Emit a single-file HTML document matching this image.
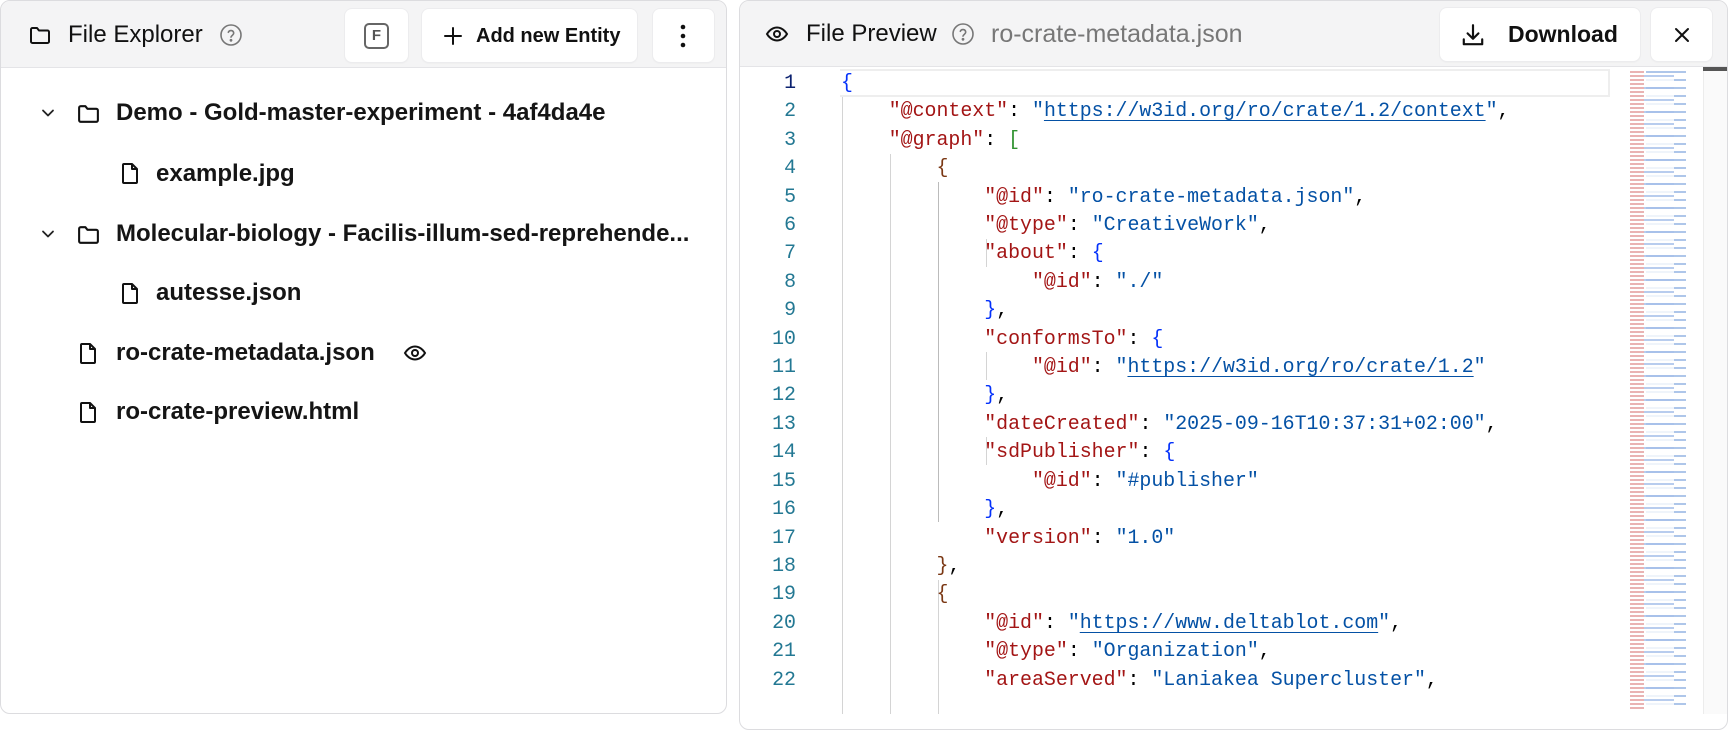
<!DOCTYPE html>
<html><head><meta charset="utf-8"><style>
*{box-sizing:border-box;margin:0;padding:0}
body{width:1728px;height:714px;background:#fff;font-family:"Liberation Sans",sans-serif;position:relative;overflow:hidden;color:#111}
.panel{position:absolute;top:0;border:1px solid #dcdcdf;border-radius:10px;overflow:hidden;background:#fff}
.hdr{position:absolute;left:0;top:0;right:0;height:67px;background:#f4f4f5;border-bottom:1px solid #e4e4e7}
.abs{position:absolute}
.btn{position:absolute;top:8px;height:53px;background:#fff;border-radius:7px;box-shadow:0 0 0 1px #ececee,0 1px 2px rgba(0,0,0,.06)}
.t{position:absolute;font-size:24px;font-weight:500;white-space:nowrap;line-height:28px}
.row{position:absolute;font-size:24px;font-weight:bold;white-space:nowrap;line-height:28px;color:#151515}
.code{position:absolute;left:841px;font-family:"Liberation Mono",monospace;font-size:19.9px;line-height:28.4px;white-space:pre;color:#000}
.ln{position:absolute;left:740px;width:56px;text-align:right;font-family:"Liberation Mono",monospace;font-size:19.9px;line-height:28.4px;color:#237893;white-space:pre}
.k{color:#a31515}.s{color:#0451a5}.u{color:#0451a5;text-decoration:underline;text-underline-offset:4px}
.b1{color:#0431fa}.b2{color:#319331}.b3{color:#7b3814}
.g{position:absolute;width:1px;background:#d4d4d4}
</style></head><body>

<!-- LEFT PANEL -->
<div class="panel" style="left:0;width:727px;height:714px">
 <div class="hdr"></div>
 <svg class="abs" style="left:27px;top:22px" width="24" height="24" viewBox="0 0 24 24" fill="none" stroke="#111" stroke-width="2" stroke-linejoin="round"><path d="M3 6.5a1.5 1.5 0 0 1 1.5-1.5h4.5l2 2.5h8.5a1.5 1.5 0 0 1 1.5 1.5v9.5a1.5 1.5 0 0 1-1.5 1.5h-15A1.5 1.5 0 0 1 3 18.5z"/></svg>
 <div class="t" style="left:67px;top:20px;font-weight:normal;color:#111">File Explorer</div>
 <svg class="abs" style="left:218px;top:22px" width="24" height="24" viewBox="0 0 24 24" fill="none" stroke="#777" stroke-width="1.6"><circle cx="12" cy="12" r="10"/><path d="M9.3 9.3a2.8 2.8 0 0 1 5.4 1c0 1.8-2.7 2.4-2.7 3.8" stroke-linecap="round"/><circle cx="12" cy="17.3" r=".6" fill="#777"/></svg>
 <div class="btn" style="left:344px;width:63px"><div class="abs" style="left:19px;top:14px;width:25px;height:26px;border:2px solid #666;border-radius:5px;font-size:15px;font-weight:bold;color:#555;text-align:center;line-height:22px">F</div></div>
 <div class="btn" style="left:421px;width:215px"><svg class="abs" style="left:20px;top:16px" width="22" height="22" viewBox="0 0 22 22" stroke="#111" stroke-width="2" stroke-linecap="round"><path d="M11 3v16M3 11h16"/></svg><div class="t" style="left:54px;top:13px;font-size:20px;font-weight:bold">Add new Entity</div></div>
 <div class="btn" style="left:652px;width:61px"><svg class="abs" style="left:27px;top:15px" width="6" height="24"><circle cx="3" cy="3" r="2.3" fill="#111"/><circle cx="3" cy="12" r="2.3" fill="#111"/><circle cx="3" cy="21" r="2.3" fill="#111"/></svg></div>

 <svg class="abs" style="left:39px;top:104px" width="16" height="16" viewBox="0 0 16 16" fill="none" stroke="#222" stroke-width="1.8" stroke-linecap="round" stroke-linejoin="round"><path d="M3 5.5l5 5 5-5"/></svg>
 <svg class="abs" style="left:75px;top:100px" width="25" height="25" viewBox="0 0 24 24" fill="none" stroke="#111" stroke-width="2" stroke-linejoin="round"><path d="M3 6.5a1.5 1.5 0 0 1 1.5-1.5h4.5l2 2.5h8.5a1.5 1.5 0 0 1 1.5 1.5v9.5a1.5 1.5 0 0 1-1.5 1.5h-15A1.5 1.5 0 0 1 3 18.5z"/></svg>
 <div class="row" style="left:115px;top:98px">Demo - Gold-master-experiment - 4af4da4e</div>

 <svg class="abs" style="left:117px;top:160px" width="24" height="25" viewBox="0 0 24 24" fill="none" stroke="#111" stroke-width="2" stroke-linejoin="round"><path d="M6 2.5h8l5 5v13a1 1 0 0 1-1 1H6a1 1 0 0 1-1-1v-17a1 1 0 0 1 1-1z"/><path d="M14 2.5v5h5"/></svg>
 <div class="row" style="left:155px;top:159px">example.jpg</div>

 <svg class="abs" style="left:39px;top:225px" width="16" height="16" viewBox="0 0 16 16" fill="none" stroke="#222" stroke-width="1.8" stroke-linecap="round" stroke-linejoin="round"><path d="M3 5.5l5 5 5-5"/></svg>
 <svg class="abs" style="left:75px;top:221px" width="25" height="25" viewBox="0 0 24 24" fill="none" stroke="#111" stroke-width="2" stroke-linejoin="round"><path d="M3 6.5a1.5 1.5 0 0 1 1.5-1.5h4.5l2 2.5h8.5a1.5 1.5 0 0 1 1.5 1.5v9.5a1.5 1.5 0 0 1-1.5 1.5h-15A1.5 1.5 0 0 1 3 18.5z"/></svg>
 <div class="row" style="left:115px;top:219px">Molecular-biology - Facilis-illum-sed-reprehende...</div>

 <svg class="abs" style="left:117px;top:280px" width="24" height="25" viewBox="0 0 24 24" fill="none" stroke="#111" stroke-width="2" stroke-linejoin="round"><path d="M6 2.5h8l5 5v13a1 1 0 0 1-1 1H6a1 1 0 0 1-1-1v-17a1 1 0 0 1 1-1z"/><path d="M14 2.5v5h5"/></svg>
 <div class="row" style="left:155px;top:278px">autesse.json</div>

 <svg class="abs" style="left:75px;top:340px" width="24" height="25" viewBox="0 0 24 24" fill="none" stroke="#111" stroke-width="2" stroke-linejoin="round"><path d="M6 2.5h8l5 5v13a1 1 0 0 1-1 1H6a1 1 0 0 1-1-1v-17a1 1 0 0 1 1-1z"/><path d="M14 2.5v5h5"/></svg>
 <div class="row" style="left:115px;top:338px">ro-crate-metadata.json</div>
 <svg class="abs" style="left:402px;top:340px" width="24" height="24" viewBox="0 0 24 24" fill="none" stroke="#111" stroke-width="2"><path d="M2 12s3.6-6.5 10-6.5S22 12 22 12s-3.6 6.5-10 6.5S2 12 2 12z"/><circle cx="12" cy="12" r="3"/></svg>

 <svg class="abs" style="left:75px;top:399px" width="24" height="25" viewBox="0 0 24 24" fill="none" stroke="#111" stroke-width="2" stroke-linejoin="round"><path d="M6 2.5h8l5 5v13a1 1 0 0 1-1 1H6a1 1 0 0 1-1-1v-17a1 1 0 0 1 1-1z"/><path d="M14 2.5v5h5"/></svg>
 <div class="row" style="left:115px;top:397px">ro-crate-preview.html</div>
</div>

<!-- RIGHT PANEL -->
<div class="panel" style="left:739px;width:989px;height:730px"></div>
<div class="abs" style="left:740px;top:1px;width:987px;height:66px;background:#f4f4f5;border-bottom:1px solid #e4e4e7;border-radius:9px 9px 0 0"></div>
<svg class="abs" style="left:765px;top:22px" width="24" height="24" viewBox="0 0 24 24" fill="none" stroke="#111" stroke-width="2"><path d="M2 12s3.6-6.5 10-6.5S22 12 22 12s-3.6 6.5-10 6.5S2 12 2 12z"/><circle cx="12" cy="12" r="3"/></svg>
<div class="t" style="left:806px;top:20px;font-weight:normal">File Preview</div>
<svg class="abs" style="left:951px;top:22px" width="24" height="24" viewBox="0 0 24 24" fill="none" stroke="#777" stroke-width="1.6"><circle cx="12" cy="12" r="10"/><path d="M9.3 9.3a2.8 2.8 0 0 1 5.4 1c0 1.8-2.7 2.4-2.7 3.8" stroke-linecap="round"/><circle cx="12" cy="17.3" r=".6" fill="#777"/></svg>
<div class="t" style="left:991px;top:20px;font-weight:normal;color:#777;font-size:25px">ro-crate-metadata.json</div>
<div class="btn" style="left:1440px;width:200px"><svg class="abs" style="left:20px;top:14px" width="26" height="26" viewBox="0 0 24 24" fill="none" stroke="#111" stroke-width="2" stroke-linecap="round" stroke-linejoin="round"><path d="M12 3v12M7 10.5l5 5 5-5M3.5 16v4.5h17V16"/></svg><div class="t" style="left:68px;top:12px;font-size:23px;font-weight:bold">Download</div></div>
<div class="btn" style="left:1651px;width:61px"><svg class="abs" style="left:21px;top:17px" width="20" height="20" viewBox="0 0 20 20" stroke="#111" stroke-width="2" stroke-linecap="round"><path d="M4 4l12 12M16 4L4 16"/></svg></div>

<div class="abs" style="left:840px;top:69px;width:770px;height:28px;border:2px solid #eeeeee;border-left:none"></div>

<div class="g" style="left:842px;top:97px;height:617px"></div>
<div class="g" style="left:890px;top:154px;height:560px"></div>
<div class="g" style="left:938px;top:182px;height:340px;background:#bbb"></div>
<div class="g" style="left:938px;top:580px;height:134px"></div>
<div class="g" style="left:986px;top:239px;height:28px"></div>
<div class="g" style="left:986px;top:352px;height:28px"></div>
<div class="g" style="left:986px;top:437px;height:28px"></div>

<div class="ln" style="top:69px"><span style="color:#0b216f">1</span>
2
3
4
5
6
7
8
9
10
11
12
13
14
15
16
17
18
19
20
21
22</div>
<div class="code" style="top:69px"><span class="b1">{</span>
    <span class="k">"@context"</span>: <span class="s">"</span><span class="u">https://w3id.org/ro/crate/1.2/context</span><span class="s">"</span>,
    <span class="k">"@graph"</span>: <span class="b2">[</span>
        <span class="b3">{</span>
            <span class="k">"@id"</span>: <span class="s">"ro-crate-metadata.json"</span>,
            <span class="k">"@type"</span>: <span class="s">"CreativeWork"</span>,
            <span class="k">"about"</span>: <span class="b1">{</span>
                <span class="k">"@id"</span>: <span class="s">"./"</span>
            <span class="b1">}</span>,
            <span class="k">"conformsTo"</span>: <span class="b1">{</span>
                <span class="k">"@id"</span>: <span class="s">"</span><span class="u">https://w3id.org/ro/crate/1.2</span><span class="s">"</span>
            <span class="b1">}</span>,
            <span class="k">"dateCreated"</span>: <span class="s">"2025-09-16T10:37:31+02:00"</span>,
            <span class="k">"sdPublisher"</span>: <span class="b1">{</span>
                <span class="k">"@id"</span>: <span class="s">"#publisher"</span>
            <span class="b1">}</span>,
            <span class="k">"version"</span>: <span class="s">"1.0"</span>
        <span class="b3">}</span>,
        <span class="b3">{</span>
            <span class="k">"@id"</span>: <span class="s">"</span><span class="u">https://www.deltablot.com</span><span class="s">"</span>,
            <span class="k">"@type"</span>: <span class="s">"Organization"</span>,
            <span class="k">"areaServed"</span>: <span class="s">"Laniakea Supercluster"</span>,</div>

<div class="abs" style="left:1610px;top:67px;width:92px;height:647px;background:#fff"></div>
<div class="abs" style="left:1630px;top:70px;width:14px;height:640px;background:repeating-linear-gradient(#fff 0 1px,#e4a0a0 1px 3px,#fff 3px 4px);opacity:.8"></div>
<div class="abs" style="left:1646px;top:70px;width:40px;height:640px;background:repeating-linear-gradient(#fff 0 1px,#9ab8e4 1px 3px,#fff 3px 8px);opacity:.8"></div>
<div class="abs" style="left:1644px;top:74px;width:30px;height:636px;background:repeating-linear-gradient(#fff 0 1px,#a6c0ea 1px 3px,#fff 3px 12px);opacity:.8"></div>
<div class="abs" style="left:1703px;top:67px;width:24px;height:647px;background:#fafafa;border-left:1px solid #ececec"></div>
<div class="abs" style="left:1703px;top:67px;width:24px;height:4px;background:#555"></div>
</body></html>
